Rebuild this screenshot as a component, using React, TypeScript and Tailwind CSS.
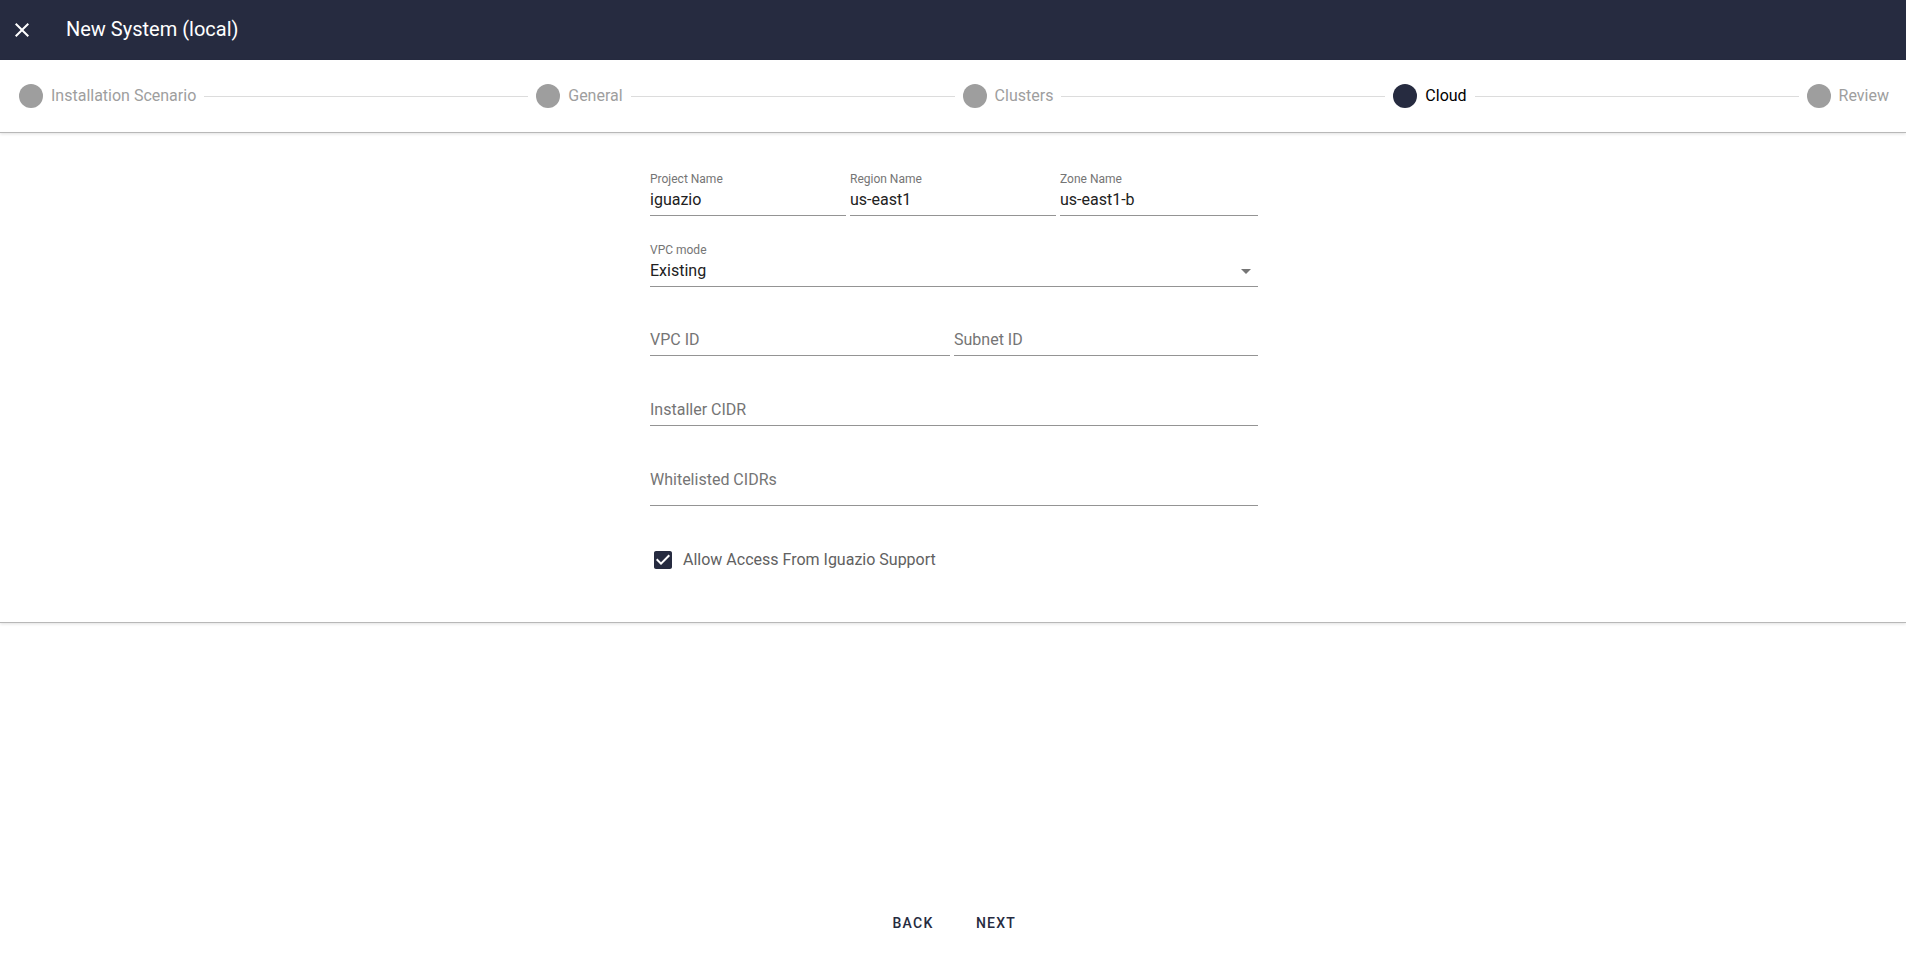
import React from 'react';

const steps = ['Installation Scenario', 'General', 'Clusters', 'Cloud', 'Review'];
const activeStep = 3;

function Field({
  label,
  value,
  placeholder,
  className = '',
  tall = false,
  select = false,
}: {
  label?: string;
  value?: string;
  placeholder?: string;
  className?: string;
  tall?: boolean;
  select?: boolean;
}) {
  return (
    <div className={className}>
      <div className="h-[14px] text-xs leading-[14px] text-[#757575]">{label}</div>
      <div
        className={`mt-[4px] flex items-center justify-between border-b border-[#949494] ${
          tall ? 'pb-[16px]' : 'pb-[6px]'
        }`}
      >
        {value ? (
          <span className="text-base leading-[19px] text-[#212121]">{value}</span>
        ) : (
          <span className="text-base leading-[19px] text-[#757575]">{placeholder}</span>
        )}
        {select && (
          <svg width="24" height="24" viewBox="0 0 24 24" className="-my-[3px] shrink-0">
            <path d="M7 10l5 5 5-5z" fill="#757575" />
          </svg>
        )}
      </div>
    </div>
  );
}

export default function App() {
  return (
    <div className="flex h-screen flex-col bg-white font-[Roboto,Arial,sans-serif]">
      {/* header */}
      <div className="flex h-[60px] shrink-0 items-center bg-[#262b40] text-white">
        <button className="ml-[10px] flex h-6 w-6 items-center justify-center">
          <svg width="24" height="24" viewBox="0 0 24 24">
            <path
              d="M19 6.41L17.59 5 12 10.59 6.41 5 5 6.41 10.59 12 5 17.59 6.41 19 12 13.41 17.59 19 19 17.59 13.41 12z"
              fill="#ffffff"
            />
          </svg>
        </button>
        <h1 className="ml-[32px] pb-[3px] text-xl leading-6">New System (local)</h1>
      </div>

      {/* stepper */}
      <div className="flex h-[72px] shrink-0 items-center pl-[19px] pr-[17px] shadow-[0_1px_0_#b8b8b8,0_2px_3px_rgba(0,0,0,0.12)]">
        {steps.map((s, i) => (
          <React.Fragment key={s}>
            {i > 0 && <div className="mx-2 h-px flex-1 bg-[#dcdcdc]" />}
            <div className="flex items-center gap-2">
              <span
                className={`h-6 w-6 rounded-full ${i === activeStep ? 'bg-[#262b40]' : 'bg-[#9e9e9e]'}`}
              />
              <span
                className={`text-base leading-5 ${i === activeStep ? 'text-[#000000]' : 'text-[#9e9e9e]'}`}
              >
                {s}
              </span>
            </div>
          </React.Fragment>
        ))}
      </div>

      {/* form card */}
      <div className="shrink-0 pb-[50px] pl-[2px] pt-[40px] shadow-[0_1px_0_#b8b8b8,0_2px_3px_rgba(0,0,0,0.12)]">
        <div className="mx-auto w-[608px]">
          <div className="grid grid-cols-[196px_206px_198px] gap-x-[4px]">
            <Field label="Project Name" value="iguazio" />
            <Field label="Region Name" value="us-east1" />
            <Field label="Zone Name" value="us-east1-b" />
          </div>
          <Field className="mt-[27px]" label="VPC mode" value="Existing" select />
          <div className="mt-[25px] grid grid-cols-[300px_304px] gap-x-[4px]">
            <Field placeholder="VPC ID" />
            <Field placeholder="Subnet ID" />
          </div>
          <Field className="mt-[26px]" placeholder="Installer CIDR" />
          <Field className="mt-[26px]" placeholder="Whitelisted CIDRs" tall />
          <label className="mt-[42px] flex h-6 items-center gap-2">
            <svg width="24" height="24" viewBox="0 0 24 24" className="ml-[1px]">
              <rect x="5" y="5" width="14" height="14" fill="#ffffff" />
              <path
                d="M19 3H5c-1.11 0-2 .9-2 2v14c0 1.1.89 2 2 2h14c1.11 0 2-.9 2-2V5c0-1.1-.89-2-2-2zm-9 14l-5-5 1.41-1.41L10 14.17l7.59-7.59L19 8l-9 9z"
                fill="#262b40"
              />
            </svg>
            <span className="text-base leading-5 text-[#616161]">Allow Access From Iguazio Support</span>
          </label>
        </div>
      </div>

      <div className="flex-1" />

      {/* footer */}
      <div className="flex shrink-0 justify-center gap-[19px] pb-3 pl-[3px]">
        <button className="h-9 min-w-16 px-2 text-sm font-medium uppercase tracking-[1.25px] text-[#262b40]">
          Back
        </button>
        <button className="h-9 min-w-16 px-2 text-sm font-medium uppercase tracking-[1.25px] text-[#262b40]">
          Next
        </button>
      </div>
    </div>
  );
}
